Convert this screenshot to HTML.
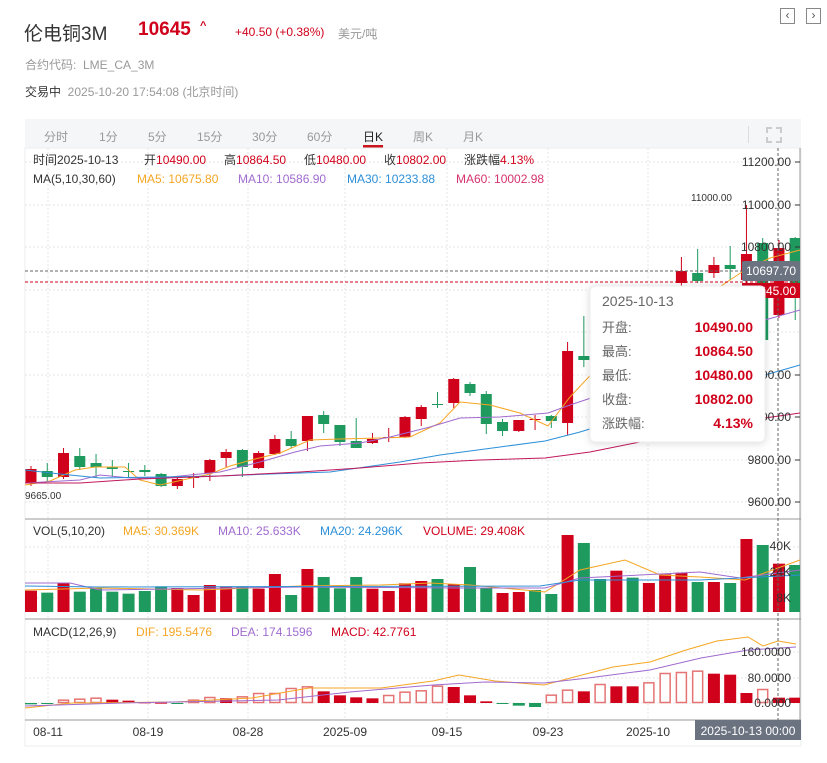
<!DOCTYPE html>
<html><head><meta charset="utf-8">
<style>
*{margin:0;padding:0;box-sizing:border-box}
body{width:827px;height:763px;background:#fff;font-family:"Liberation Sans","Noto Sans CJK SC",sans-serif;position:relative;overflow:hidden;color:#333}
.a{position:absolute;white-space:nowrap}
.nav{position:absolute;top:8px;width:15px;height:16px;border:1px solid #888;font-size:12px;line-height:13px;text-align:center;color:#555}
.tab{position:absolute;top:128px;font-size:12px;color:#999}
</style></head><body>
<div class="a" style="left:24px;top:19px;font-size:19px;color:#333">伦电铜3M</div>
<div class="a" style="left:138px;top:19px;font-size:19px;font-weight:bold;color:#d0021b">10645</div>
<div class="a" style="left:200px;top:20px;font-size:11px;font-weight:bold;color:#d0021b">^</div>
<div class="a" style="left:235px;top:25px;font-size:12px;color:#d0021b">+40.50 (+0.38%)</div>
<div class="a" style="left:338px;top:25px;font-size:12px;color:#999">美元/吨</div>
<div class="nav" style="left:780px">‹</div>
<div class="nav" style="left:806px">›</div>
<div class="a" style="left:25px;top:56px;font-size:12px;color:#999">合约代码:&nbsp; LME_CA_3M</div>
<div class="a" style="left:25px;top:83px;font-size:12px;color:#333">交易中 <span style="color:#999">&nbsp;2025-10-20 17:54:08 (北京时间)</span></div>

<div class="a" style="left:25px;top:119px;width:776px;height:29px;background:#f5f6f8"></div>
<div class="tab" style="left:44px">分时</div>
<div class="tab" style="left:99px">1分</div>
<div class="tab" style="left:148px">5分</div>
<div class="tab" style="left:197px">15分</div>
<div class="tab" style="left:252px">30分</div>
<div class="tab" style="left:307px">60分</div>
<div class="tab" style="left:363px;color:#222">日K</div>
<div class="a" style="left:363px;top:145px;width:20px;height:3px;background:#c8161d"></div>
<div class="tab" style="left:413px">周K</div>
<div class="tab" style="left:463px">月K</div>
<div class="a" style="left:748px;top:126px;width:1px;height:17px;background:#ddd"></div>
<div class="a" style="left:766px;top:127px;width:16px;height:16px;border:2px dashed #ccc"></div>

<svg class="a" style="left:0;top:0" width="827" height="763" xmlns="http://www.w3.org/2000/svg" font-family="Liberation Sans,Noto Sans CJK SC,sans-serif">
<defs><clipPath id="cp"><rect x="25" y="148" width="775" height="572"/></clipPath></defs>
<rect x="25" y="148" width="776" height="598" fill="none" stroke="#eee"/>
<g stroke="#e6e6e6" stroke-dasharray="2,2">
<line x1="25" x2="800" y1="162" y2="162"/><line x1="25" x2="800" y1="205" y2="205"/><line x1="25" x2="800" y1="247" y2="247"/><line x1="25" x2="800" y1="290" y2="290"/><line x1="25" x2="800" y1="332" y2="332"/><line x1="25" x2="800" y1="375" y2="375"/><line x1="25" x2="800" y1="417" y2="417"/><line x1="25" x2="800" y1="460" y2="460"/><line x1="25" x2="800" y1="502" y2="502"/>
<line x1="25" x2="800" y1="547" y2="547"/><line x1="25" x2="800" y1="572" y2="572"/><line x1="25" x2="800" y1="598" y2="598"/>
<line x1="25" x2="800" y1="652" y2="652"/><line x1="25" x2="800" y1="678" y2="678"/><line x1="25" x2="800" y1="703" y2="703"/>
<line x1="48" x2="48" y1="148" y2="720"/><line x1="148" x2="148" y1="148" y2="720"/><line x1="248" x2="248" y1="148" y2="720"/><line x1="345" x2="345" y1="148" y2="720"/><line x1="447" x2="447" y1="148" y2="720"/><line x1="548" x2="548" y1="148" y2="720"/><line x1="648" x2="648" y1="148" y2="720"/>
</g>
<line x1="25" x2="801" y1="519" y2="519" stroke="#999"/>
<line x1="25" x2="801" y1="619" y2="619" stroke="#999"/>
<line x1="25" x2="801" y1="720" y2="720" stroke="#999"/>
<line x1="800" x2="800" y1="148" y2="720" stroke="#999"/>
<g clip-path="url(#cp)"><g id="cand"></g><g id="vol"></g><g id="macd"></g></g>
<g fill="none" stroke-width="1">
<polyline stroke="#f5a623" points="25,485 50,481 75,470 95,467 125,467 140,480 160,485 210,474 230,466 255,459 280,453 310,440 340,439 380,438 410,437 440,423 460,402 490,405 520,413 548,426 570,397 600,365 630,360 660,355 700,300 745,270 770,258 800,250"/>
<polyline stroke="#a06bcf" points="25,483 80,480 100,475 130,478 160,478 220,472 260,462 295,452 320,446 360,443 390,437 430,427 460,418 500,417 548,413 570,405 600,395 700,330 765,320 800,310"/>
<polyline stroke="#2d8fd8" points="25,470 60,474 100,478 160,477 220,476 270,474 330,472 400,462 440,455 500,447 545,441 580,432 700,395 765,375 800,365"/>
<polyline stroke="#c2185b" points="25,483 80,483 140,479 220,476 300,472 360,468 420,463 480,460 545,458 590,452 700,430 765,418 800,413"/>
<polyline stroke="#f5a623" points="25,590 100,588 200,590 300,586 380,585 430,583 470,585 545,592 580,570 625,560 660,575 700,577 745,580 800,560"/>
<polyline stroke="#a06bcf" points="25,583 70,583 100,590 300,587 460,588 545,588 580,578 700,572 740,578 800,570"/>
<polyline stroke="#2d8fd8" points="25,586 100,587 540,586 580,580 700,580 800,575"/>
<polyline stroke="#f5a623" points="25,708 72,703 175,702 252,698 309,688 381,688 433,681 459,675 495,681 544,685 582,675 613,667 650,662 686,650 717,641 748,637 763,646 778,641 796,644"/>
<polyline stroke="#a06bcf" points="25,706 123,703 278,700 350,692 433,685 485,682 544,683 588,678 650,670 701,658 748,650 796,647"/>
</g>
<line x1="25" x2="800" y1="271" y2="271" stroke="#666" stroke-dasharray="3,2"/>
<line x1="25" x2="800" y1="282" y2="282" stroke="#d0021b" stroke-dasharray="3,2"/>
<line x1="778" x2="778" y1="148" y2="720" stroke="#666" stroke-dasharray="3,2"/>
<g font-size="12" fill="#333" text-anchor="end">
<text x="791" y="166">11200.00</text><text x="791" y="209">11000.00</text><text x="791" y="251">10800.00</text>
<text x="791" y="379">10200.00</text><text x="791" y="421">10000.00</text><text x="791" y="464">9800.00</text><text x="791" y="506">9600.00</text>
<text x="791" y="550">40K</text><text x="791" y="576">24K</text><text x="791" y="602">8K</text>
<text x="791" y="656">160.0000</text><text x="791" y="682">80.0000</text><text x="791" y="707">0.0000</text>
</g>
<g stroke="#333"><line x1="795" x2="800" y1="162" y2="162"/><line x1="795" x2="800" y1="205" y2="205"/><line x1="795" x2="800" y1="247" y2="247"/><line x1="795" x2="800" y1="375" y2="375"/><line x1="795" x2="800" y1="417" y2="417"/><line x1="795" x2="800" y1="460" y2="460"/><line x1="795" x2="800" y1="502" y2="502"/></g>
<text x="691" y="201" font-size="10" fill="#333">11000.00</text>
<text x="25" y="499" font-size="10" fill="#333">9665.00</text>
<rect x="742" y="283" width="58" height="15" fill="#d0021b"/><text x="771" y="295" font-size="12" fill="#fff" text-anchor="middle">10645.00</text>
<rect x="742" y="261" width="58" height="20" rx="2" fill="#6b7280"/><text x="771" y="275" font-size="12" fill="#fff" text-anchor="middle">10697.70</text>
<g font-size="12">
<text x="33" y="164" fill="#333">时间2025-10-13</text>
<text x="144" y="164" fill="#333">开<tspan fill="#d0021b">10490.00</tspan></text>
<text x="224" y="164" fill="#333">高<tspan fill="#d0021b">10864.50</tspan></text>
<text x="304" y="164" fill="#333">低<tspan fill="#d0021b">10480.00</tspan></text>
<text x="384" y="164" fill="#333">收<tspan fill="#d0021b">10802.00</tspan></text>
<text x="464" y="164" fill="#333">涨跌幅<tspan fill="#d0021b">4.13%</tspan></text>
<text x="33" y="183" fill="#333">MA(5,10,30,60)</text>
<text x="137" y="183" fill="#f5a623">MA5: 10675.80</text>
<text x="238" y="183" fill="#a06bcf">MA10: 10586.90</text>
<text x="347" y="183" fill="#2d8fd8">MA30: 10233.88</text>
<text x="456" y="183" fill="#d6336c">MA60: 10002.98</text>
<text x="33" y="535" fill="#333">VOL(5,10,20)</text>
<text x="123" y="535" fill="#f5a623">MA5: 30.369K</text>
<text x="218" y="535" fill="#a06bcf">MA10: 25.633K</text>
<text x="320" y="535" fill="#2d8fd8">MA20: 24.296K</text>
<text x="423" y="535" fill="#d0021b">VOLUME: 29.408K</text>
<text x="33" y="636" fill="#333">MACD(12,26,9)</text>
<text x="136" y="636" fill="#f5a623">DIF: 195.5476</text>
<text x="231" y="636" fill="#a06bcf">DEA: 174.1596</text>
<text x="331" y="636" fill="#d0021b">MACD: 42.7761</text>
<g fill="#333" text-anchor="middle">
<text x="48" y="736">08-11</text><text x="148" y="736">08-19</text><text x="248" y="736">08-28</text><text x="345" y="736">2025-09</text><text x="447" y="736">09-15</text><text x="548" y="736">09-23</text><text x="648" y="736">2025-10</text>
</g>
<rect x="695" y="720" width="106" height="20" fill="#6b7280"/>
<text x="748" y="735" fill="#fff" text-anchor="middle">2025-10-13 00:00</text>
</g>
<g>
<rect x="590" y="286" width="175" height="156" rx="5" fill="#fff" stroke="#eee" style="filter:drop-shadow(0 1px 4px rgba(0,0,0,.15))"/>
<text x="602" y="306" font-size="14" fill="#666">2025-10-13</text>
<g font-size="13" fill="#666"><text x="602" y="332">开盘:</text><text x="602" y="356">最高:</text><text x="602" y="380">最低:</text><text x="602" y="404">收盘:</text><text x="602" y="428">涨跌幅:</text></g>
<g font-size="14" font-weight="bold" fill="#d0021b" text-anchor="end"><text x="753" y="332">10490.00</text><text x="753" y="356">10864.50</text><text x="753" y="380">10480.00</text><text x="753" y="404">10802.00</text><text x="753" y="428">4.13%</text></g>
</g>
</svg>
<script>
var R="#d0021b",G="#1e9a5f",NS="http://www.w3.org/2000/svg",SP=16.26;
function el(p,t,a){var e=document.createElementNS(NS,t);for(var k in a)e.setAttribute(k,a[k]);p.appendChild(e);}
var C=[[1,469,483,466,486],[0,471,477,463,481],[1,453,477,448,479],[0,456,467,448,470],[0,463,467,454,478],[0,467,469,460,477],[0,471,472,463,477],[0,470,472,465,476],[0,474,486,473,487],[1,479,486,476,489],[1,476,478,473,488],[1,460,473,459,481],[1,452,458,449,467],[0,450,467,449,477],[1,453,468,451,469],[1,439,454,435,455],[0,439,446,431,448],[1,416,441,416,451],[0,415,424,411,433],[0,425,442,425,446],[0,441,448,418,448],[1,439,443,433,444],[1,437,438,428,442],[1,417,437,416,438],[1,407,419,405,426],[0,404,405,392,408],[1,379,403,378,408],[0,384,393,382,396],[0,394,424,391,434],[0,422,431,419,436],[1,420,431,420,432],[1,419,420,415,430],[0,416,421,415,428],[1,351,423,342,435],[0,356,360,316,367],[0,365,376,345,380],[1,350,370,340,375],[0,345,360,330,365],[1,330,355,320,360],[0,320,330,300,340],[1,271,283,257,290],[0,273,281,249,283],[1,265,273,257,278],[0,265,269,246,280],[1,254,280,205,284],[0,243,340,238,345],[1,248,315,240,318],[0,238,293,237,320]];
var g=document.getElementById("cand");
C.forEach(function(c,i){var x=31+i*SP,col=c[0]?R:G;el(g,"line",{x1:x,x2:x,y1:c[3],y2:c[4],stroke:col});el(g,"rect",{x:x-5.5,y:c[1],width:11,height:Math.max(1,c[2]-c[1]),fill:col});});
var V="R227,G233,R203,G230,G220,G230,G236,G228,G214,R219,R240,R210,R214,G214,R221,R177,G240,R162,G186,G220,G186,R221,R228,R205,R198,G192,R208,G156,G218,R234,R231,G225,G237,R60,G84,G192,R167,G188,R204,R178,R173,G201,R201,G204,R72,G90,R146,G150".split(",");
var v=document.getElementById("vol");
V.forEach(function(s,i){var x=31+i*SP,y=515+(+s.slice(1))/3;el(v,"rect",{x:x-6,y:y,width:12,height:612-y,fill:s[0]=="R"?R:G});});
var M="g-4,g-3,h10,h13,h16,s10,s7,s2,s1,g-3,h10,h18,s14,h20,h30,h30,h45,h50,s35,s23,s17,s14,h24,h34,h38,h52,s48,s23,s5,g-2,g-8,g-12,h25,h40,s35,h57,s50,s50,h62,h90,h93,h97,s88,s85,s30,h42,s16,s16".split(",");
var m=document.getElementById("macd");
M.forEach(function(s,i){var x=31+i*SP,h=(+s.slice(1))/3,y=h>0?703-h:703,hh=Math.max(1,Math.abs(h));
if(s[0]=="h")el(m,"rect",{x:x-5,y:y+0.5,width:10,height:hh-1,fill:"#fff",stroke:"#e57373","stroke-width":1.5});
else el(m,"rect",{x:x-6,y:y,width:12,height:hh,fill:s[0]=="g"?G:R});});
</script>
</body></html>
